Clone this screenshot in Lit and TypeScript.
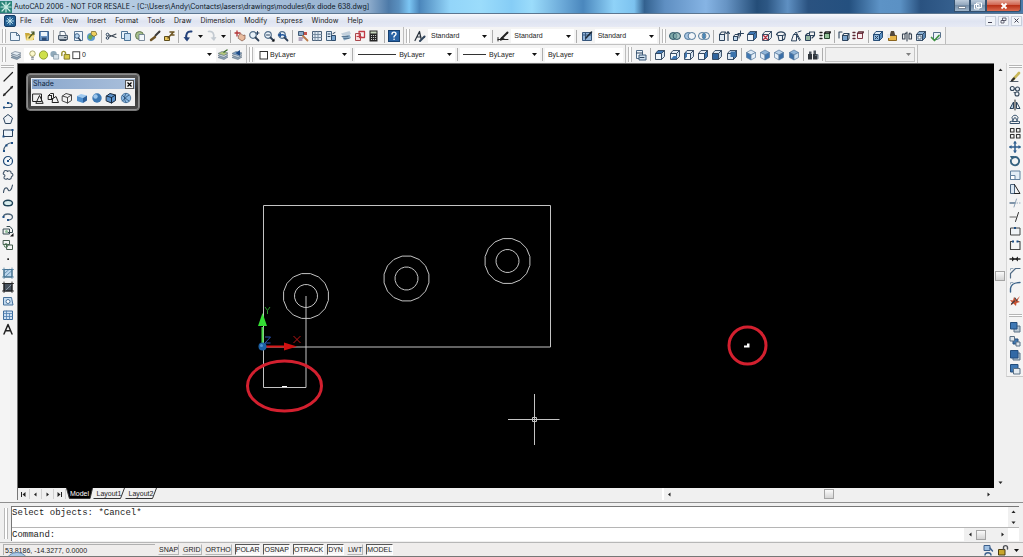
import { LitElement, html, svg, css, nothing, TemplateResult } from "lit";
import { customElement, state } from "lit/decorators.js";
import { classMap } from "lit/directives/class-map.js";

const INK = "#2c435c";
const BLUE = "#3f78b4";
const PALE = "#c3dbf0";

const cube = (front: string, top: string, side: string, line = INK) => svg`
  <g stroke=${line} stroke-width=".9" stroke-linejoin="round">
    <path fill=${front} d="M1.5 4.5h6v6h-6z"/>
    <path fill=${top} d="M1.5 4.5l2.5-3h6.500l-3 3z"/>
    <path fill=${side} d="M7.500 4.500l3-3v6l-3 3z"/>
  </g>`;

const iso = (left: string, right: string, top: string) => svg`
  <g stroke="#56789c" stroke-width=".7" stroke-linejoin="round">
    <path fill=${top} d="M6 1l4.500 2.500L6 6 1.500 3.500z"/>
    <path fill=${left} d="M1.500 3.500L6 6v5L1.500 8.500z"/>
    <path fill=${right} d="M10.500 3.500L6 6v5l4.500-2.500z"/>
  </g>`;

const stroke = (d: string, color = INK, width = 1) =>
  svg`<path d=${d} fill="none" stroke=${color} stroke-width=${width} stroke-linecap="round" stroke-linejoin="round"/>`;
const fill = (d: string, color: string) => svg`<path d=${d} fill=${color}/>`;

const nodes = (points: number[][], color = "#1d4f86") =>
  points.map(([x, y]) => svg`<rect x=${x - 1} y=${y - 1} width="2" height="2" fill=${color}/>`);

const sheets = (color: string) => svg`
  <g stroke="#5d6f82" stroke-width=".6"><path fill="#8fa3b5" d="M1 8.500L5 6.500l6 1.500-4 2.500z"/>
  <path fill="#c9d4de" d="M1 6.500l4-2 6 1.500-4 2.500z"/><path fill=${color} d="M1 4.500l4-2L11 4 7 6.500z"/></g>`;

const lens = (extra: unknown) => svg`
  <circle cx="5" cy="5" r="3.300" fill="#e8f1f8" stroke="#54708c" stroke-width="1.200"/>
  ${stroke("M7.500 7.500l3 3", "#2d4058", 1.8)}${extra}`;

const ICONS: Record<string, unknown> = {
  new: svg`<path d="M1.500 2.500h6l3 3v5h-9z" fill="#eaf4fd" stroke="#5b7894"/>${stroke("M7.500 2.500v3h3", "#5b7894")}`,
  open: svg`${fill("M1 3h4l1 1h4v6H2z", "#c9a838")}${fill("M3.500 5.500H11L8.500 10.500H2z", "#f2df8c")}${stroke("M5 8l5-6M7.500 2H10v2.500", "#4b5a2a", 1.2)}`,
  save: svg`<path d="M1.500 1.500h9v9h-9z" fill="#6c95c5" stroke="#3c5f8b"/>${fill("M3 2h6v4H3z", "#eef4fa")}${fill("M4 7.500h4.500v3H4z", "#2e4b72")}`,
  print: svg`${fill("M3 1h5l1 4H3z", "#f7fafd")}${stroke("M3 5V1.500h4.500L9 5", "#5c6c7d")}<path d="M1.500 5.500h9v4h-9z" fill="#b9c3cd" stroke="#4f5e6e"/>${stroke("M3 10.500h6M7.500 7.500h1.500", "#39495a")}`,
  preview: svg`<path d="M2.500 1.500h8v9h-8z" fill="#eef6fd" stroke="#5b7894"/><circle cx="5" cy="6" r="2.300" fill="#bddaf2" stroke="#3d5f85"/>${stroke("M6.500 8l2 2.500", INK, 1.4)}`,
  publish: svg`<circle cx="5" cy="7" r="4" fill="#5c9ad0"/>${fill("M3 4.500L7 6l-2 4-3-2z", "#6aa84f")}<path d="M5.500 1.500h4l1.500 3-3 2-3-2z" fill="#f0d060" stroke="#6b5c1d" stroke-width=".7"/>`,
  cut: svg`${stroke("M11 4L4 7M11 7.500L4 5", "#3b4653", 1.1)}<circle cx="2.500" cy="4.500" r="1.300" fill="none" stroke=${INK}/><circle cx="2.500" cy="8" r="1.300" fill="none" stroke=${INK}/>`,
  copy: svg`<g fill="#e9f3fc" stroke="#4f7597"><path d="M1.500 1.500h6v7h-6z"/><path d="M4.500 3.500h6v7h-6z" fill="#c5def3"/></g>`,
  paste: svg`<circle cx="5.500" cy="5.500" r="4" fill="#a7bf8d" stroke="#667b50"/><path d="M5 4.500h5.500v6H5z" fill="#f3f7fb" stroke="#5f7286" stroke-width=".8"/>`,
  match: svg`${stroke("M6.500 5.500l4-4", "#3a3a3a", 2)}${stroke("M2 10l4-3", "#6d5223", 2.400)}`,
  blockedit: svg`<path d="M1.500 6.500h5v4h-5z" fill="#e9c65a" stroke="#5b4c1d"/>${stroke("M5 8l5.500-6M7 2h4M8 5h3", "#6b5320", 1.500)}`,
  undo: svg`${stroke("M9.500 1.500C5 1 3.500 4 4.500 9", "#24427a", 2)}${fill("M1.500 7L8 7.500 5 11.500z", "#24427a")}`,
  redo: svg`${stroke("M2.500 1.500C7 1 8.500 4 7.500 8", "#c3cad1", 1.700)}${fill("M10.500 7L4.500 7.500 8 11z", "#c3cad1")}`,
  pan: svg`${fill("M5 5l2-1.500 2 2L11 5v4l-3 2-3.500-2.500z", "#e8ba9d")}${stroke("M5 5l2-1.500 2 2L11 5v4l-3 2-3.500-2.500z", "#835442", .7)}${stroke("M1 3h5M3 1v5", "#b33436", 1.300)}`,
  zoomrt: lens(stroke("M8 3h3M9.500 1.500v3", "#28415f")),
  zoomwin: lens(svg`${stroke("M3.500 5h3")}${fill("M11.500 8.500v3h-3z", "#111")}`),
  zoomprev: lens(svg`${fill("M4 2.500v5L.500 5z", "#23579b")}${stroke("M4 5c3-1 4 0 5 2", "#23579b", 1.400)}`),
  props: svg`<path d="M1.500 1.500h5v4h-5z" fill="#8dabc8" stroke="#3f5974"/><path d="M7 2h3v3H7z" fill="#c2514a"/>${stroke("M2 8h4M2 10h3", "#6b5080")}${stroke("M6 6l4.500 4.500", "#b97a4a", 1.800)}`,
  dcenter: svg`<path d="M1.500 1.500h9v9h-9z" fill="#dfe9f3" stroke="#4a6078"/>${stroke("M4 1.500v9M7 1.500v9M1.500 4.500h9M1.500 7.500h9", "#6d8399", .9)}`,
  palettes: svg`<path d="M1.500 1.500h5v9h-5z" fill="#d9e8f5" stroke="#46637f"/><path d="M6.500 5.500h4v5h-4z" fill="#7ba6cf" stroke="#2d4b6b"/>${stroke("M3 4h2M3 6.500h2M8 3.500l2-1")}`,
  sheetset: svg`${fill("M1 3.500L9.500 1l1.500 3-8 2z", "#c2cfdb")}${fill("M2 6.500l7.500-2L11 8 4 10.500z", "#88a7c1")}${stroke("M2 6.500h6M4 8.500h5", "#4c6b87", .8)}`,
  markup: svg`<path d="M1.500 3.500h5v7h-5z" fill="#f7dcdc" stroke="#a8474b"/>${stroke("M5 1.500h5.500v6H5.500z", "#c33b45", 1.300)}${stroke("M3 6.500h4", "#c33b45")}`,
  calc: svg`<path d="M1.500.500h8v11h-8z" fill="#262626"/>${fill("M2.500 1.500h6v2h-6z", "#c8d6bd")}${stroke("M3.500 5.500h.1M5.500 5.500h.1M7.500 5.500h.1M3.500 7.500h.1M5.500 7.500h.1M7.500 7.500h.1M3.500 9.500h.1M5.500 9.500h.1M7.500 9.500h.1", "#ddd", 1.100)}`,
  help: svg`<rect x=".500" y=".500" width="11" height="11" fill="#2862a4" stroke="#16406f"/>${stroke("M4 4c0-2.500 4-2.500 4 0 0 1.500-2 1.500-2 3", "#fff", 1.400)}${stroke("M6 9.300h.1", "#fff", 1.500)}`,
  textstyle: svg`${stroke("M1 10.500L5.500 1.500l1.500 7M3 7h4", "#27303a", 1.200)}${stroke("M6 11l4.500-4.500", "#30455c", 2)}`,
  dimstyle: svg`${stroke("M1 9.500h10M1 7.500v3.500", "#222")}${stroke("M4 9l6.500-6.500", "#222", 2)}${fill("M3 11l1.500-4L8 9z", "#222")}`,
  tablestyle: svg`<path d="M1.500 2.500h9v8h-9z" fill="#8fb2d8" stroke="#35557b"/>${stroke("M1.500 5h9M4.500 2.500v8", "#35557b")}${stroke("M5 8l5.500-6", "#1d2a38", 1.600)}`,
  union: svg`<g fill="#7fa9a9" stroke="#2e5566"><ellipse cx="4.200" cy="6" rx="3.700" ry="3.500"/><ellipse cx="7.800" cy="6" rx="3.700" ry="3.500" fill-opacity=".7"/></g>`,
  subtract: svg`<g fill="none" stroke="#4f7799"><ellipse cx="4.200" cy="6" rx="3.700" ry="3.500" fill="#a9c6e2"/><ellipse cx="7.800" cy="6" rx="3.700" ry="3.500" fill="#f3f6f9"/></g>`,
  intersect: svg`<g fill="none" stroke="#4f7799"><ellipse cx="4.200" cy="6" rx="3.700" ry="3.500"/><ellipse cx="7.800" cy="6" rx="3.700" ry="3.500"/><path d="M6 3.500v5" stroke="#4a88b8" stroke-width="2"/></g>`,
  extrude: svg`<path d="M1.500 4.500h5v6h-5z" fill="#dfe8f1" stroke=${INK}/>${stroke("M1.500 4.500l2-2.500h4l-1 2.500M10 10.500V2M8.500 3.500L10 1.500l1.500 2", INK, 1.100)}`,
  movef: svg`<path d="M1.500 6.500h4v4h-4z" fill=${PALE} stroke=${INK}/>${stroke("M1.500 6.500l1.500-2h4L5.500 6.500M7 4.500V8M8.500 1v5M6 3.500h5.500", INK)}`,
  offsetf: cube("#f2f6fa", BLUE, BLUE),
  deletef: svg`${cube("#f9eff0", "#f3f3f3", "#dfe4e9")}${stroke("M2.500 5.500l4 4M6.500 5.500l-4 4", "#b13344", 1.200)}`,
  rotatef: svg`${stroke("M3 5.500h4.500v5H4zM1.500 4.500C3 1 9 1 10.500 4.500M7.500 5.500l3-1-1 4.500-2.500 1.500M3 5.500L1.500 4.500", INK, 1.100)}`,
  taperf: svg`${stroke("M1.500 10.500l2-6h3v6zM4 4.500l2-2.500 4.500 8M6.500 4.500l3 6M8 2l3-1", INK)}`,
  copyf: svg`<path d="M1.500 5.500h5v5h-5z" fill="#93b4a0" stroke=${INK}/>${stroke("M1.500 5.500l2-2h2M6.500 5.500h4v-3.500h-5v3M8 8l2.500-2.500", INK, 1.100)}`,
  colorf: svg`<path d="M5.500 3.500h5v5h-5z" fill="#95c199" stroke="#27462f"/>${stroke("M1 2.500h2M1 5.500h2M1 8.500h2M5.500 3.500l1-1.500h5l-1 1.500", "#222", 1.400)}`,
  copye: svg`<path d="M4.500 5.500h5v5h-5z" fill="#7aa3cc" stroke=${INK}/>${stroke("M4.500 5.500l1.500-2h5l-1.500 2M11 3.500v5l-1.500 2M1 8V2h3", INK, 1.100)}`,
  colore: svg`<path d="M5.500 3.500h5v5h-5z" fill="#f6ecee" stroke="#7e3543"/>${stroke("M1 2.500h2M1 5.500h2M1 8.500h2M5.500 3.500l1-1.500h5l-1 1.500", "#5c2a35", 1.300)}`,
  imprint: svg`${cube("#8fb9df", "#dbe9f5", "#5b8fc0", "#173f6b")}${stroke("M3 6l3 3M6 6l-3 3")}`,
  clean: svg`<path d="M2.500 5.500h8v5h-8z" fill="#e7b549" stroke="#8b641d"/>${fill("M5 1h3l1.500 5h-6z", "#54493c")}${fill("M1 4h3v4H1z", "#e3e7ec")}`,
  separate: svg`${stroke("M1.500 4h2.500v5H1.500zM8 4h2.500v5H8zM6 2v9M4 4l1-1M8 4l1-1", "#3a4654", 1.100)}`,
  shell: svg`${cube("#cfe0ef", "#8db1d3", "#5c88b4")}<path d="M3 6h3v3H3z" fill="#fff" stroke=${INK} stroke-width=".7"/>`,
  check: svg`<path d="M3.500 2.500h7v5l-3 2h-4z" fill="#edf3f8" stroke="#55708b"/>${stroke("M1.500 7.500l3 3 4.500-5", "#3d9142", 1.700)}`,
  layers: sheets("#e4ecf3"),
  layercur: svg`${sheets("#b4c77e")}${stroke("M7 3l3-2", "#3b6b2b", 1.500)}`,
  layerprev: svg`${sheets("#7aa0c8")}${fill("M9 1v6L4.500 4z", "#1f4b85")}`,
  bulb: svg`<circle cx="6" cy="4.500" r="3" fill="#fcf9cf" stroke="#8d8a4c" stroke-width=".8"/>${stroke("M5 8.500h2M5 10.500h2", "#5a6570")}`,
  sun: svg`<circle cx="6" cy="6" r="4.500" fill="#cfe04a" stroke="#8b9a2e"/>`,
  frozen: svg`<circle cx="5" cy="5" r="3.500" fill="#8fa9ba"/><path d="M5 5.500h5.500v5H5z" fill="#d7e2ea" stroke="#758a9a" stroke-width=".7"/>`,
  unlock: svg`<path d="M4.500 5.500h6v5h-6z" fill="#d8cc4b" stroke="#7b7424"/>${stroke("M2 6.500V4c0-2.500 3.500-2.500 4-.500v2", "#9a9230", 1.600)}`,
  swatch: svg`<rect x="2" y="2.500" width="7.500" height="7.500" fill="#fff" stroke="#333"/>`,
  named: svg`<path d="M1.500 1.500h6v8h-6z" fill="#eef5fb" stroke="#4f6b87"/><path d="M4 6h7v5H4z" fill="#cfe0ef" stroke="#3c5a79"/>${stroke("M1.500 4h6M5 8.500h4")}`,
  vtop: cube("#eef4fa", BLUE, "#d5e3f0"),
  vbottom: svg`${cube("#f4f8fb", "#e6eef6", "#d5e3f0")}${fill("M2 10l2.500-3H8L7.500 10z", BLUE)}`,
  vleft: svg`${cube("#f4f8fb", "#e6eef6", "#d5e3f0")}${fill("M2 5l2-2.500v5L2 10z", BLUE)}`,
  vright: cube("#f4f8fb", "#e6eef6", BLUE),
  vfront: cube("#2f65a0", "#dce8f3", "#c1d4e6"),
  vback: svg`${cube("#dce8f3", "#dce8f3", "#4a82bb")}${fill("M4.500 2.500H10V8H4.500z", "#3b73ac")}`,
  isosw: iso(BLUE, "#e6eff7", "#dbe8f4"),
  isose: iso("#e6eff7", BLUE, "#8fb4d8"),
  isone: iso("#e6eff7", "#3a6fa8", "#b7d0e8"),
  isonw: iso("#3a6fa8", "#cddfef", "#8fb4d8"),
  camera: svg`${fill("M1 5h4v5.500H1zM6 5h4.500v5.500H6z", "#30353b")}${fill("M2 2.500h2.500V5H2zM6.500 1.500H9V5H6.500z", "#4f565e")}${stroke("M8.500 6.500l2.500-1v4", "#62707e")}`,
  wire2d: svg`${stroke("M1 2h8.500v7.500H1zM4 11l3.500-7.500 3.500 7.500z", "#222")}`,
  wire3d: svg`${stroke("M1.500 3.500l2-2h3v4l-2 2h-3zM6 6.500l3-2 2.500 6h-6zM4.500 3.500v4M1.500 3.500h3", "#222")}`,
  hidden: svg`${stroke("M1.500 4L5 1.500 10.500 3v5.500L6.500 11 1.500 9zM1.500 4l5 1.500 4-2.500M6.500 5.500V11", "#444")}`,
  flat: svg`${fill("M1 4L5 2l6 1.500L7 6z", "#9cc8ef")}${fill("M1 4l6 2v5L1 9z", "#4f90cf")}${fill("M7 6l4-2.500V8.500L7 11z", "#2a5f9c")}`,
  gouraud: svg`<circle cx="6" cy="6" r="4.700" fill="#3b78b4"/><circle cx="4.500" cy="4.500" r="2.200" fill="#9cc6ec"/>`,
  flatedge: svg`${fill("M1.500 4L5 1.500 10.500 3v5.500L6.500 11 1.500 9z", "#5b92cb")}${stroke("M1.500 4L5 1.500 10.500 3v5.500L6.500 11 1.500 9zM1.500 4l5 1.500 4-2.500M6.500 5.500V11", "#14263b")}`,
  gouraudedge: svg`<circle cx="6" cy="6" r="4.700" fill="#8ab8e2" stroke="#3c6894" stroke-width=".8"/>${stroke("M2.500 3.500c3 3 4.500 4 6.500 5.500M9 3C6 5 4 7 2.500 9M6 1.500c-2 3-2 6 0 9", "#24486d", .8)}`,
  line: svg`${stroke("M2 10L10.500 1.500", "#222", 1.200)}`,
  xline: svg`${stroke("M1.500 10.500l9-9", "#222", 1.200)}${nodes([[2.500, 9.500], [9.500, 2.500]], "#222")}`,
  pline: svg`${stroke("M1.500 8.500h6c3.500 0 3.500-4.500-.5-4.500", "#3a5876", 1.200)}${nodes([[2, 8.500], [6, 4]])}`,
  polygon: svg`<path d="M6 1.500l4.500 3.500-1.800 5.500H3.300L1.500 5z" fill="#eef2f6" stroke=${INK}/>`,
  rect: svg`<path d="M1.500 3h9v6.500h-9z" fill="#eef4fa" stroke=${INK}/>${nodes([[1.500, 9.500], [10.500, 3]])}`,
  arc: svg`${stroke("M1.500 10.500C2 5 5 2 10.500 1.500", "#3d5872", 1.200)}${nodes([[2, 10], [4.500, 4.500], [10, 2]])}`,
  circle: svg`<circle cx="6" cy="6" r="4.500" fill="#f4f8fb" stroke="#1f4a77" stroke-width="1.200"/>${stroke("M6 6l2.500-2.500")}${nodes([[6, 6]])}`,
  cloud: svg`${stroke("M2 3c0-2 3-2 3.500-.5C7 1 9.500 2 9 4c2.500.5 2.500 3 .5 3.500 0 3-3 3.500-4 2-1.500 1.500-4 .5-3.500-1.500 1.500-1 1-2 0-2.500S1 4 2 3z", "#44566a", 1.100)}`,
  spline: stroke("M1.500 9.500C2 4 5 4 6 6.500S9.500 8 10.500 2", "#3d5166", 1.100),
  ellipse: svg`<ellipse cx="6" cy="6" rx="4.500" ry="2.800" fill="#d8ecec" stroke="#1e4256" stroke-width="1.400"/>`,
  ellarc: svg`${stroke("M1.500 6C1.500 2 10 2 10.500 6c0 2-2.500 3-4.500 3", "#4d6477", 1.300)}${nodes([[1.500, 6], [6, 9]])}`,
  insert: svg`${stroke("M1.500 4h6v5h-6zM5 1.500h3l2.500 3v3H6", "#344b50")}<circle cx="4.500" cy="6.500" r="1.500" fill="#8fbf9a"/>${fill("M11.500 8v3.500H8z", "#111")}`,
  block: svg`${stroke("M1.500 1.500h6v4h-6zM5 6h5.500v4.500H5z", "#41594a")}<circle cx="4" cy="6.500" r="1.800" fill="none" stroke="#4b7a54"/>`,
  point: svg`<rect x="5.300" y="5.300" width="1.700" height="1.700" fill="#222"/>`,
  hatch: svg`<path d="M2 2.500h8v7.500H2z" fill="#bcd6ec" stroke="#1f4a66"/>${stroke("M2 7l5-4.500M3 10l7-6.500M.5 2.500h11M.5 10h11M2 1v10.500M10 1v10.500", "#4e7ea0", .8)}`,
  gradient: svg`<path d="M2 2.500h8v7.500H2z" fill="#47525e" stroke="#181d22"/>${stroke("M.5 2.500h11M.5 10h11M2 1v10.500M10 1v10.500", "#222", .9)}${stroke("M4 9l5-5", "#8b98a6")}`,
  region: svg`<path d="M1.500 2.500h8l1.500 7.500h-9.500z" fill="#c5dbef" stroke="#44709a"/><circle cx="6" cy="6.500" r="2" fill="#fff" stroke="#44709a"/>`,
  table: svg`<path d="M1.500 2h9v8.500h-9z" fill="#cfe1f3" stroke="#3e6d9d"/>${stroke("M1.500 4.500h9M4.500 2v8.500M7.500 4.500v6M1.500 7.500h9", "#4f7fb0", .8)}`,
  mtext: stroke("M2 11L6 1.500 10 11M3.500 7.700h5", "#222", 1.500),
  erase: svg`${stroke("M1 10.500h8", "#55606c")}${stroke("M4.500 8l5.500-6", "#c9b75a", 2.600)}${stroke("M3 9.500l2-2", "#2f2f2f", 2.200)}`,
  copyobj: svg`${stroke("M4.500 4.500l4-2M5 7.500l3 1", "#35475a")}<g fill="#eef3f8" stroke="#35475a" stroke-width="1.100"><circle cx="3.300" cy="3.500" r="2"/><circle cx="8.500" cy="4" r="2"/><circle cx="8" cy="9" r="2"/></g>`,
  mirror: svg`${stroke("M6 1v10", "#222")}<path d="M4.500 3v6.500H1z" fill="#b9cfe2" stroke=${INK}/><path d="M7.500 3v6.500H11z" fill="#f3f6f9" stroke=${INK}/>`,
  offset: svg`${stroke("M1.500 10.500h9v-2c-3 0-2-2-1.500-4C8 1.500 4 1.500 3 4.500c.5 2 1.500 4-1.500 4zM3.500 8.500h5c-1.500-1-1-4-2.500-4s-1 3-2.500 4", "#35506b", 1)}`,
  array: stroke("M1.500 1.500H5V5H1.500zM7.500 1.500H11V5H7.500zM1.500 7.500H5V11H1.500zM7.500 7.500H11V11H7.500z", "#333", 1.100),
  move: svg`${stroke("M6 1v10M1 6h10", "#2f5e8f", 1.500)}${fill("M6 0l2 2.500H4zM6 12l2-2.500H4zM0 6l2.500-2v4zM12 6L9.500 4v4z", "#2f5e8f")}`,
  rotate: svg`${stroke("M3.500 3C8 0 12 5 9 9c-3 3-8 .5-7-4", "#35617f", 1.800)}${fill("M1 1l4.500 0-2.500 4z", "#35617f")}`,
  scale: svg`<path d="M1.500 2h9.500v8.500H1.500z" fill="#e3edf6" stroke="#62809e"/><path d="M1.500 6.500H6v4H1.500z" fill="#fff" stroke="#62809e"/>`,
  stretch: svg`<path d="M1.500 1.500h4v9h-4z" fill="#dce8f3" stroke="#4c647d"/>${stroke("M5.500 1.500l5.500 9H5.500", "#222")}`,
  trim: svg`${stroke("M1 6h5", "#5a7590", 1.300)}${stroke("M8 6h.5M10.500 6h.5M7.500 2L5 10", "#8ba0b5")}`,
  extend: svg`${stroke("M1 6h6", "#666")}${stroke("M9.500 1.500l-3 9", "#333")}`,
  breakat: svg`<path d="M1.500 3h9.500v7H1.500z" fill="#f0f3f6" stroke="#444"/>${nodes([[6, 3]])}`,
  break: svg`${stroke("M4 2.500H1.500v8H11v-8H8.500", "#444", 1.100)}${nodes([[4, 2.500], [8.500, 2.500]])}`,
  join: svg`${stroke("M1 6h10", "#222", 1.300)}${fill("M3 3.500L6 6 3 8.500zM9 3.500L6 6l3 2.500z", "#222")}`,
  chamfer: svg`${stroke("M1.500 11V6.500L6.500 1.500H11", "#526c86", 1.200)}${stroke("M1.500 3V1.500H4", "#9ab")}`,
  fillet: svg`${stroke("M1.500 11V7.500C2 3 5 1.500 11 1.500", "#3a6288", 1.400)}${stroke("M1.500 3V1.500H4", "#9ab")}`,
  explode: svg`${fill("M1 5l3 .5L5 2l2 3 4-4-2.500 4.500L11 7 7.500 8 7 11 4.500 8.500 1.500 10.500 3 7.500z", "#c9502f")}${stroke("M2.500 9l3-3M6 3l2 3", "#3b3f46", 1.100)}`,
  front: svg`<path d="M5 5h6v6H5z" fill="#b9c7d4" stroke="#5b7085"/><path d="M1.500 1.500h6.500V8H1.500z" fill="#3f78b4" stroke="#234d7c"/>`,
  back: svg`<path d="M4 4h5v5H4z" fill="#3f78b4" stroke="#234d7c"/><path d="M1 1.500h4.500V6H1zM7 7h4v4H7z" fill="#dfe6ed" stroke="#5b7085"/>`,
  above: svg`<path d="M4 4h7v7H4z" fill="#b9c7d4" stroke="#5b7085"/><path d="M1.500 1.500H9V9H1.500z" fill="#3269a5" stroke="#234d7c"/>`,
  under: svg`<path d="M1.500 1.500H9V9H1.500z" fill="#3f78b4" stroke="#234d7c"/><path d="M4.500 5.500H11V11H4.500z" fill="#e4ebf1" stroke="#5b7085"/>`,
  comm: svg`<path d="M2 1.500h6v5H2z" fill="#9fc0e2" stroke="#3c5f8b"/>${stroke("M3 11c0-3 6-3 6 0M8 4l2.500 3", "#3c5f8b", 1.400)}`,
  lock: svg`<path d="M1.500 5.500h6.500v5.500H1.500z" fill="#c9a62c" stroke="#4b3c0e"/>${stroke("M6.500 5.500V3.500c0-2.500 4-2.500 4 0V5", "#4c4f55", 1.400)}`,
  drawing: svg`<rect x=".500" y=".500" width="11" height="11" rx="1.500" fill="#235f93" stroke="#173e66"/>${stroke("M6 2.500v7M2.500 6h7M3.500 3.500l5 5M8.500 3.500l-5 5", "#bfe4ee")}`,
  app: svg`<rect width="12" height="12" fill="#2a8378"/>${stroke("M2 2l3 3M10 2L7 5M2 10l3-3M10 10L7 7M6 1v10M1 6h10", "#c8ebe4", 1.200)}`,
};

const icon = (name: string) => html`<svg class="icon" viewBox="0 0 12 12" aria-hidden="true">${ICONS[name]}</svg>`;

const STANDARD = "new open save | print preview publish | cut copy paste match blockedit | undo v redo v | pan zoomrt zoomwin zoomprev | props dcenter palettes sheetset markup calc | help";
const SOLIDS = "union subtract intersect | extrude movef offsetf deletef rotatef taperf copyf colorf | copye colore | imprint clean separate shell check";
const VIEWS = "named | vtop vbottom vleft vright vfront vback | isosw isose isone isonw | camera |";
const SHADE = "wire2d wire3d hidden flat gouraud flatedge gouraudedge";
const DRAW = "line xline pline polygon rect arc circle cloud spline ellipse ellarc insert block point hatch gradient region table mtext";
const MODIFY = "erase copyobj mirror offset array move rotate scale stretch trim extend breakat break join chamfer fillet explode";
const ORDER = "front back above under";
const MENUS = ["File", "Edit", "View", "Insert", "Format", "Tools", "Draw", "Dimension", "Modify", "Express", "Window", "Help"];

const ring = (cx: number, cy: number, r: number, sides: number) =>
  Array.from({ length: sides }, (_, i) => {
    const a = ((i + 0.5) / sides) * Math.PI * 2;
    return `${(cx + r * Math.cos(a)).toFixed(1)},${(cy + r * Math.sin(a)).toFixed(1)}`;
  }).join(" ");

@customElement("app-root")
export class AppRoot extends LitElement {
  @state() private modes: Record<string, boolean> = {
    SNAP: false, GRID: false, ORTHO: false, POLAR: true, OSNAP: true, OTRACK: true, DYN: true, LWT: false, MODEL: true,
  };
  @state() private tab = "Model";

  static styles = css`
    :host {
      display: grid;
      grid-template-rows: 14px 13px 18px 18px minmax(0, 1fr) 40px 14px;
      height: 100vh;
      overflow: hidden;
      background: #f0f0f0;
      color: #1c1c1c;
      font: 7px/10px "Liberation Sans", sans-serif;
      position: relative;
    }
    * { box-sizing: border-box; }
    button, select, input {
      font: inherit; color: inherit; border: 0; padding: 0; margin: 0; background: none; border-radius: 0; min-width: 0;
    }
    .icon { width: 12px; height: 12px; display: block; flex: none; }
    .title {
      display: flex; align-items: center; gap: 2px; padding-left: 0;
      font: 7px/13px Inter, sans-serif; color: #0c141e;
      border-bottom: 1px solid #5c7690;
      background: linear-gradient(90deg, #c3d9ea 0, #b4cbe2 12%, #a3bcd8 28%, #8fadcd 36%, #4d7aa8 38%, #5a90bf 39%, #7cc6f4 40%, #4b86bb 41%, #93d5f9 44%, #9bdcfb 47%, #86cdf6 50%, #9bdcfb 52%, #6ba9d8 55%, #4a87bd 57%, #8fd2f8 60%, #7cc2ef 62%, #33618f 63%, #5f8fc2 65%, #86b4e4 69%, #6794c4 71%, #244d78 74%, #2d5784 75%, #5f90c2 77%, #2a5280 79%, #24507f 83%, #5d93c6 86%, #5b91c4 88%, #2a5280 90%, #4c7cab 100%);
    }
    .title h1 { font: inherit; margin: 0; flex: 1; white-space: nowrap; }
    .win { display: flex; align-self: flex-start; height: 12px; padding-right: 2px; }
    .win button {
      width: 16px; display: grid; place-items: center; color: #fff;
      border: 1px solid #33506e; border-top: 0; background: linear-gradient(#bccbdb, #8ea3b9 50%, #7790aa 50%, #9fb5ca);
    }
    .win .close { width: 35px; background: linear-gradient(#e3a596, #cf5c47 50%, #b93218 50%, #d9694e); border-radius: 0 0 3px 0; }
    .win svg { width: 10px; height: 8px; }
    .menu {
      display: flex; align-items: center; padding-left: 4px;
      font: 7px/12px Inter, sans-serif;
      background: linear-gradient(#f6f8fc, #dfe4f1 55%, #e7eaf5);
    }
    .menu nav { display: flex; flex: 1; gap: 1px; }
    .menu nav button { padding: 0 4px; }
    .mdi { display: flex; gap: 2px; padding-right: 1px; }
    .mdi button { width: 11px; height: 10px; display: grid; place-items: center; border: 1px solid #c8cfdb; background: #f1f4f9; }
    .mdi svg { width: 7px; height: 7px; }
    .row { display: flex; align-items: stretch; border-bottom: 1px solid #c2c2c2; }
    .row.last { border-bottom: 0; }
    .bar { display: flex; align-items: center; min-width: 0; border-right: 1px solid #bdbdbd; padding: 1px 2px 0 0; background: #f4f4f4; }
    .grip { align-self: stretch; flex: none; width: 4px; margin: 1px 2px; border: solid #b9b9b9; border-width: 0 1px; background: #fff; }
    .tool { flex: 1 1 0; display: grid; place-items: center; height: 14px; }
    .drop { flex: 0 0 9px; display: grid; place-items: center; height: 14px; }
    .drop svg, .combo .arrow { width: 5px; height: 3px; flex: none; }
    .sep { flex: none; width: 1px; height: 13px; margin: 0 2px; background: #adadad; }
    .std { width: 404px; } .sty { width: 256px; } .sol { width: 286px; }
    .lay { width: 247px; } .prp { width: 379px; } .vie { width: 292px; }
    .combo { position: relative; display: flex; align-items: center; height: 14px; background: #fff; padding: 0 3px; flex: 1 1 0; min-width: 0; }
    .combo.layer { flex: 0 0 192px; padding-right: 4px; }
    .combo.layer .icon { width: 11px; }
    .combo.c94 { flex-grow: 94; } .combo.c99 { flex-grow: 99; } .combo.c78 { flex-grow: 78; } .combo.c76 { flex-grow: 76; }
    .combo select { appearance: none; flex: 1; width: 0; height: 12px; line-height: 12px; }
    .combo .sample { flex: none; height: 1px; background: #333; margin-right: 3px; }
    .sample.long { width: 38px; } .sample.short { width: 23px; }
    .combo.off { flex: 0 0 90px; height: 15px; background: #f0f0f0; border: 1px solid #c4c4c4; }
    .combo.off .arrow { opacity: .5; }
    .fit { flex: 0 0 16px; }
    .work { display: grid; grid-template-columns: 17px minmax(0, 1fr) 17px; min-height: 0; border-bottom: 1px solid #8f8f8f; }
    .side { display: flex; flex-direction: column; align-items: center; padding: 2px 2px 0 0; background: #f4f4f4; }
    .side.right { padding: 2px 0 0; border-left: 1px solid #d5d5d5; align-self: start; border-bottom: 1px solid #c8c8c8; }
    .side .tool { flex: 0 0 14px; width: 14px; }
    .hgrip { width: 13px; height: 3px; margin-bottom: 2px; border: solid #b5b5b5; border-width: 1px 0; background: #fff; }
    .right .tool + .hgrip { margin: 6px 0 3px; }
    .view { display: grid; grid-template: minmax(0, 1fr) 12px / minmax(0, 1fr) 12px; padding-bottom: 2px; min-height: 0; }
    .canvas { position: relative; background: #000; border: solid #6f6f6f; border-width: 1px 0 0 1px; overflow: hidden; }
    .canvas > svg { display: block; width: 100%; height: 100%; }
    .vbar { display: flex; flex-direction: column; align-items: center; background: #f0f0f0; }
    .vbar button, .hbar button { flex: none; display: grid; place-items: center; width: 12px; height: 12px; }
    .track { flex: 1; display: grid; place-items: center; }
    .thumb { width: 10px; height: 10px; border: 1px solid #a4a4a4; background: linear-gradient(#fafafa, #d4d4d4); }
    .mini { width: 5px; height: 5px; fill: #222; }
    .foot { display: flex; background: #f0f0f0; min-width: 0; }
    .foot nav { display: flex; align-items: center; border-left: 1px solid #777; }
    .foot nav button { width: 12px; height: 10px; display: grid; place-items: center; border-right: 1px solid #cfcfcf; }
    .tabs { display: flex; }
    .tab { position: relative; height: 11px; width: 32px; }
    .tab svg { position: absolute; inset: 0; width: 100%; height: 100%; fill: #f0f0f0; stroke: #333; stroke-width: 1; }
    .tab span { position: relative; }
    .tab.on { width: 27px; color: #fff; }
    .tab.on svg { fill: #000; }
    .hbar { display: flex; align-items: center; flex: 0 0 34%; margin-left: auto; border-left: 2px solid #fff; }
    .cmd { display: flex; padding: 3px 4px 1px 3px; border-bottom: 1px solid #b7b7b7; }
    .cmd .grip { margin: 2px 3px 2px 1px; }
    .box { flex: 1; display: flex; flex-direction: column; border: solid #777; border-width: 1px 0 0 1px; background: #fff; font: 9px/13px "Liberation Mono", monospace; }
    .log { flex: 1; display: flex; border-bottom: 1px solid #b5b5b5; min-height: 0; }
    .log p { margin: 0; flex: 1; }
    .log .vbar { justify-content: space-between; width: 11px; }
    .log .vbar button { height: 9px; }
    .ask { display: flex; height: 13px; padding-right: 11px; line-height: 14px; }
    .ask label { flex: none; }
    .ask input { flex: 1; }
    .ask .hbar { flex: 0 0 44px; border: 0; background: #f0f0f0; }
    .status { position: relative; display: flex; align-items: stretch; gap: 3px; padding: 1px 2px 1px 3px; border-bottom: 1px solid #777; background: #efedec; }
    .status output { width: 152px; border: solid #b0b0b0; border-width: 1px 0 0 1px; padding-left: 1px; line-height: 11px; }
    .status button.mode { border: 1px solid #efedec; border-right-color: #b5b5b5; border-bottom-color: #b5b5b5; line-height: 10px; }
    .status button.mode.on { border-color: #555 #fff #fff #555; background: #f7f7f7; }
    .tray { margin-left: auto; display: flex; align-items: center; gap: 3px; }
    .tray button { display: block; }
    .orb { position: absolute; left: 7px; bottom: 0; width: 20px; height: 4px; }
    .palette { position: absolute; left: 8px; top: 9px; width: 114px; padding: 4px; border: 1px solid #777; border-radius: 4px; background: linear-gradient(#5b5b5b, #303030 50%, #4c4c4c); box-shadow: inset 0 0 0 1px #8d8d8d; }
    .palette header { display: flex; align-items: center; justify-content: space-between; height: 11px; padding: 0 1px 0 1px; background: linear-gradient(90deg, #8ba8cd, #a9bfdb); font: 7px/10px Inter, sans-serif; color: #10263f; border: solid #e8eef5; border-width: 1px 0 0 1px; }
    .palette header button { width: 9px; height: 9px; background: #f0f0f0; border: 1px solid #555; display: grid; place-items: center; }
    .palette header svg { width: 5px; height: 5px; }
    .palette .tools { display: flex; background: #f1f1f1; height: 17px; align-items: center; padding-right: 2px; }
  `;

  private tools(spec: string): TemplateResult[] {
    return spec.split(" ").map((name) =>
      name === "|" ? html`<span class="sep"></span>`
      : name === "v" ? html`<button class="drop" aria-label="History">${this.caret()}</button>`
      : html`<button class="tool" aria-label=${name}>${icon(name)}</button>`);
  }

  private caret(cls = "") {
    return html`<svg class=${cls} viewBox="0 0 5 3" aria-hidden="true"><path d="M0 0h5L2.500 3z" fill="#111"/></svg>`;
  }

  private combo(name: string, value: string, cls = "", lead: unknown = nothing) {
    return html`<div class="combo ${cls}">${lead}<select aria-label=${name} ?disabled=${cls === "off"}><option>${value}</option></select>${this.caret("arrow")}</div>`;
  }

  private mini(d: string) {
    return html`<svg class="mini" viewBox="0 0 5 5" aria-hidden="true"><path d=${d}/></svg>`;
  }

  private up = "M.500 4h4L2.500 1.500z";
  private down = "M.500 1.500h4L2.500 4z";
  private left = "M3.500 .500v4L1 2.500z";
  private right = "M1.500 .500v4L4 2.500z";

  private drawing() {
    return html`<svg viewBox="18 64 976 424" preserveAspectRatio="xMinYMin" role="img" aria-label="Drawing">
      <g fill="none" stroke="#c4c4c4" stroke-width="1">
        <path d="M263.500 205.500h287v141.500h-287zM263.500 346v41.500h42.500V296"/>
        ${[[306, 296], [406.5, 278.5], [507.5, 261]].map(([x, y]) => svg`
          <polygon points=${ring(x, y, 22.8, 16)}/><polygon points=${ring(x, y, 11.5, 20)}/>`)}
        <path d="M508 419.500h51.500M534.500 394v51M532.500 417.500h4v4h-4z"/>
      </g>
      <path d="M282 386.500h5" stroke="#fff"/>
      <path d="M262.500 346V327" stroke="#45d845" stroke-width="2"/><path d="M262.500 313l4.500 13h-9z" fill="#35dd35"/>
      <path d="M263 346.500h22" stroke="#d81818" stroke-width="2"/><path d="M297 346.500l-13-4v8z" fill="#d01010"/>
      <circle cx="262.500" cy="346.500" r="4" fill="#1d62a5"/><circle cx="261.500" cy="345.500" r="1.500" fill="#4e94d3"/>
      <g fill="none" stroke-width="1">
        <path stroke="#2b9a2b" d="M265 307l2.500 3.500L270 307M267.500 310.500V314"/>
        <path stroke="#b41414" d="M293.500 336l7 7M300.500 336l-7 7"/>
        <path stroke="#2a55b4" d="M265 337h5.500l-5.500 6h5.500"/>
      </g>
      <g fill="none" stroke="#d3202f" stroke-width="3">
        <ellipse cx="284.500" cy="386" rx="37" ry="25"/><circle cx="747.500" cy="345.500" r="18.500"/>
      </g>
      <path d="M744 345.500h3v-2h2.500v4H744z" fill="#fff"/>
    </svg>`;
  }

  private tabButton(name: string) {
    const on = this.tab === name;
    return html`<button class=${classMap({ tab: true, on })} @click=${() => (this.tab = name)}>
      <svg viewBox="0 0 32 11" preserveAspectRatio="none"><path d=${on ? "M.500 0L4 10.500h24.500L31.500 0" : "M.500 10.500h27L31.500 0"}/></svg><span>${name}</span></button>`;
  }

  render() {
    return html`
      <header class="title">${icon("app")}
        <h1>AutoCAD 2006 - NOT FOR RESALE - [C:\\Users\\Andy\\Contacts\\lasers\\drawings\\modules\\6x diode 638.dwg]</h1>
        <div class="win">
          <button aria-label="Minimize"><svg viewBox="0 0 10 8"><path d="M1.500 4.500h7v2h-7z" fill="#fff" stroke="#44566a" stroke-width=".6"/></svg></button>
          <button aria-label="Restore"><svg viewBox="0 0 10 8"><path d="M3.500 1h5v4.500h-5zM1.500 2.500H6V7H1.500z" fill="#8ea3b9" stroke="#fff"/></svg></button>
          <button class="close" aria-label="Close"><svg viewBox="0 0 10 8"><path d="M2.500 1.500l5 5M7.500 1.500l-5 5" stroke="#fff" stroke-width="1.800"/></svg></button>
        </div>
      </header>
      <div class="menu">${icon("drawing")}
        <nav>${MENUS.map((m) => html`<button>${m}</button>`)}</nav>
        <div class="mdi">
          <button aria-label="Minimize drawing"><svg viewBox="0 0 7 7"><path d="M1 5.500h4" stroke="#445"/></svg></button>
          <button aria-label="Restore drawing"><svg viewBox="0 0 7 7"><path d="M2.500 1h3.500v2.500h-3.500zM1 3.500h3V6H1z" fill="none" stroke="#445" stroke-width=".8"/></svg></button>
          <button aria-label="Close drawing"><svg viewBox="0 0 7 7"><path d="M1.500 1.500l4 4M5.500 1.500l-4 4" stroke="#445"/></svg></button>
        </div>
      </div>
      <div class="row">
        <div class="bar std"><span class="grip"></span>${this.tools(STANDARD)}</div>
        <div class="bar sty"><span class="grip"></span>
          <button class="tool fit" aria-label="Text style">${icon("textstyle")}</button>${this.combo("Text style", "Standard")}<span class="sep"></span>
          <button class="tool fit" aria-label="Dimension style">${icon("dimstyle")}</button>${this.combo("Dimension style", "Standard")}<span class="sep"></span>
          <button class="tool fit" aria-label="Table style">${icon("tablestyle")}</button>${this.combo("Table style", "Standard")}
        </div>
        <div class="bar sol"><span class="grip"></span>${this.tools(SOLIDS)}</div>
      </div>
      <div class="row last">
        <div class="bar lay"><span class="grip"></span>
          <button class="tool fit" aria-label="Layers">${icon("layers")}</button>
          ${this.combo("Layer", "0", "layer", ["bulb", "sun", "frozen", "unlock", "swatch"].map(icon))}
          ${this.tools("layercur layerprev")}
        </div>
        <div class="bar prp"><span class="grip"></span>
          ${this.combo("Color", "ByLayer", "c94", icon("swatch"))}<span class="sep"></span>
          ${this.combo("Linetype", "ByLayer", "c99", html`<span class="sample long"></span>`)}<span class="sep"></span>
          ${this.combo("Lineweight", "ByLayer", "c78", html`<span class="sample short"></span>`)}<span class="sep"></span>
          ${this.combo("Plot style", "ByLayer", "c76")}
        </div>
        <div class="bar vie"><span class="grip"></span>${this.tools(VIEWS)}${this.combo("View", "", "off")}</div>
      </div>
      <main class="work">
        <div class="side"><span class="hgrip"></span>${this.tools(DRAW)}</div>
        <div class="view">
          <div class="canvas">${this.drawing()}
            <section class="palette">
              <header><span>Shade</span><button aria-label="Close palette"><svg viewBox="0 0 5 5"><path d="M.500 .500l4 4M4.500 .500l-4 4" stroke="#000" stroke-width="1.200"/></svg></button></header>
              <div class="tools">${this.tools(SHADE)}</div>
            </section>
          </div>
          <div class="vbar"><button aria-label="Scroll up">${this.mini(this.up)}</button><div class="track"><span class="thumb"></span></div><button aria-label="Scroll down">${this.mini(this.down)}</button></div>
          <div class="foot">
            <nav>
              <button aria-label="First tab">${this.mini("M0 0h1v5H0zM4.500 0v5L1.500 2.500z")}</button>
              <button aria-label="Previous tab">${this.mini(this.left)}</button>
              <button aria-label="Next tab">${this.mini(this.right)}</button>
              <button aria-label="Last tab">${this.mini("M4 0h1v5H4zM.500 0v5l3-2.500z")}</button>
            </nav>
            <div class="tabs">${["Model", "Layout1", "Layout2"].map((t) => this.tabButton(t))}</div>
            <div class="hbar"><button aria-label="Scroll left">${this.mini(this.left)}</button><div class="track"><span class="thumb"></span></div><button aria-label="Scroll right">${this.mini(this.right)}</button></div>
          </div>
        </div>
        <div class="side right"><span class="hgrip"></span>${this.tools(MODIFY)}<span class="hgrip"></span>${this.tools(ORDER)}</div>
      </main>
      <section class="cmd"><span class="grip"></span>
        <div class="box">
          <div class="log"><p>Select objects: *Cancel*</p>
            <div class="vbar"><button aria-label="Older">${this.mini(this.up)}</button><button aria-label="Newer">${this.mini(this.down)}</button></div></div>
          <div class="ask"><label for="cmd">Command:</label><input id="cmd" autocomplete="off">
            <div class="hbar"><button aria-label="Scroll left">${this.mini(this.left)}</button><span class="thumb"></span><span class="track"></span><button aria-label="Scroll right">${this.mini(this.right)}</button></div></div>
        </div>
      </section>
      <footer class="status">
        <output>53.8186, -14.3277, 0.0000</output>
        ${Object.entries(this.modes).map(([name, on]) => html`
          <button class=${classMap({ mode: true, on })} aria-pressed=${on} @click=${() => (this.modes = { ...this.modes, [name]: !on })}>${name}</button>`)}
        <svg class="orb" viewBox="0 0 20 4" aria-hidden="true"><ellipse cx="10" cy="8" rx="10" ry="7.500" fill="#a9c9e6" stroke="#6c8eb0"/></svg>
        <div class="tray"><button aria-label="Communication center">${icon("comm")}</button><button aria-label="Toolbar lock">${icon("lock")}</button><button class="drop" aria-label="Tray menu">${this.caret()}</button></div>
      </footer>`;
  }
}
